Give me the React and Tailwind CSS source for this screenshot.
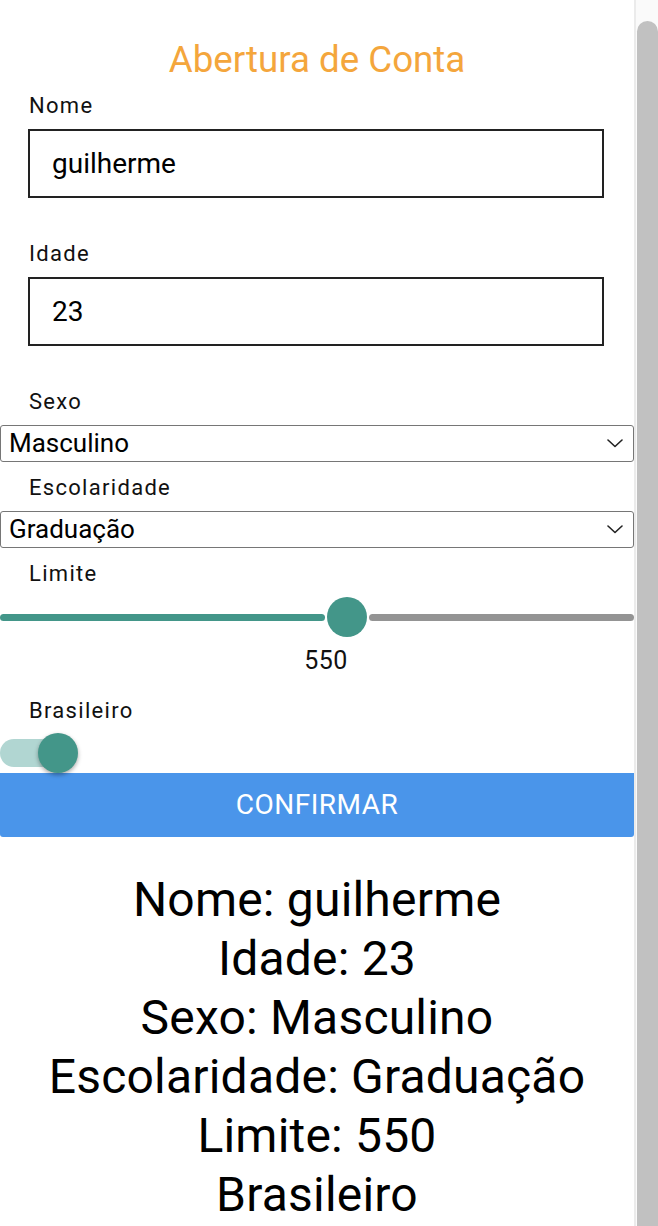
import React, { useState } from 'react';

const font = { fontFamily: 'Roboto, "Liberation Sans", sans-serif' };

const Label = ({ children, className = '' }) => (
  <div className={`h-6 pl-[29px] text-[22px] leading-6 tracking-[1.3px] text-[#111] ${className}`}>{children}</div>
);

const Chevron = () => (
  <svg width="16" height="9" viewBox="0 0 16 9" fill="none" className="shrink-0">
    <path d="M1 1l7 6.5L15 1" stroke="#222" strokeWidth="1.6" strokeLinecap="round" strokeLinejoin="round" />
  </svg>
);

const FakeSelect = ({ value, className = '' }) => (
  <div
    className={`flex h-[37px] items-center justify-between rounded-[3px] border border-[#767676] pl-2 pr-[10px] text-[26px] text-black ${className}`}
  >
    <span>{value}</span>
    <Chevron />
  </div>
);

export default function App() {
  const [nome, setNome] = useState('guilherme');
  const [idade, setIdade] = useState('23');
  const limite = 550;

  return (
    <div className="flex h-[1226px] w-[658px] overflow-hidden bg-white" style={font}>
      {/* main column */}
      <div className="flex w-[634px] flex-col">
        <div className="mt-[38px] h-[44px] text-center text-[36.7px] leading-[44px] text-[#f4a63c]">
          Abertura de Conta
        </div>

        <Label className="mt-[12px]">Nome</Label>
        <input
          value={nome}
          onChange={(e) => setNome(e.target.value)}
          className="ml-[28px] mt-[11px] h-[69px] w-[576px] border-2 border-[#222] px-[22px] text-[28px] text-black outline-none"
          style={font}
        />

        <Label className="mt-[44px]">Idade</Label>
        <input
          value={idade}
          onChange={(e) => setIdade(e.target.value)}
          className="ml-[28px] mt-[11px] h-[69px] w-[576px] border-2 border-[#222] px-[22px] text-[28px] text-black outline-none"
          style={font}
        />

        <Label className="mt-[44px]">Sexo</Label>
        <FakeSelect value="Masculino" className="mt-[11px]" />

        <Label className="mt-[14px]">Escolaridade</Label>
        <FakeSelect value="Graduação" className="mt-[11px]" />

        <Label className="mt-[14px]">Limite</Label>
        {/* slider */}
        <div className="mt-[11px] flex h-[40px] items-center">
          <div className="h-[7px] w-[325px] rounded-full bg-[#439689]" />
          <div className="mx-[2px] h-[40px] w-[40px] shrink-0 rounded-full bg-[#439689]" />
          <div className="h-[7px] flex-1 rounded-full bg-[#949494]" />
        </div>
        <div className="mt-[12px] h-6 w-[652px] text-center text-[25px] leading-6 tracking-[0.5px] text-[#111]">{limite}</div>

        <Label className="mt-[26px]">Brasileiro</Label>
        {/* switch */}
        <div className="relative mt-[10px] h-[40px] w-[80px]">
          <div className="absolute left-0 top-[6px] h-[28px] w-[56px] rounded-full bg-[#b1d6d2]" />
          <div className="absolute left-[38px] top-0 h-[40px] w-[40px] rounded-full bg-[#439689] shadow-[0_2px_4px_rgba(0,0,0,0.35)]" />
        </div>

        <button
          className="flex h-[64px] w-full items-center justify-center rounded-b-[3px] bg-[#4a95ea] text-[28px] tracking-[0.5px] text-white"
          style={font}
        >
          CONFIRMAR
        </button>

        <div className="mt-[33px] text-center text-[48px] leading-[59px] tracking-[0.2px] text-black">
          <div>Nome: {nome}</div>
          <div>Idade: {idade}</div>
          <div>Sexo: Masculino</div>
          <div>Escolaridade: Graduação</div>
          <div>Limite: {limite}</div>
          <div>Brasileiro</div>
        </div>
      </div>

      {/* scrollbar */}
      <div className="flex w-[24px] justify-center border-l-2 border-[#ebebeb] bg-[#fafafa] pt-[21px]">
        <div className="ml-[1px] w-[15px] flex-1 rounded-t-full bg-[#c1c1c1]" />
      </div>
    </div>
  );
}
